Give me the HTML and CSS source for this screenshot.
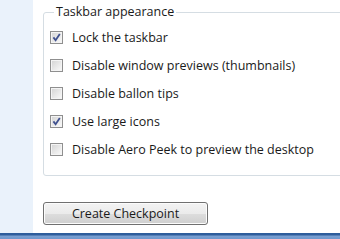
FILE: index.html
```html
<!DOCTYPE html>
<html>
<head>
<meta charset="utf-8">
<link rel="stylesheet" href="styles.css">
</head>
<body>
<div class="page">
  <div class="sidebar"></div>
  <div class="main">
    <fieldset class="group">
      <legend class="legend">Taskbar appearance</legend>
      <div class="row"><span class="box checked"><svg viewBox="0 0 9 9" width="9" height="9"><path d="M1.4 4.4 L3.6 7.2 L7.8 1" fill="none" stroke="#40518f" stroke-width="1.8"/></svg></span><span class="label">Lock the taskbar</span></div>
      <div class="row"><span class="box"></span><span class="label">Disable window previews (thumbnails)</span></div>
      <div class="row"><span class="box"></span><span class="label">Disable ballon tips</span></div>
      <div class="row"><span class="box checked"><svg viewBox="0 0 9 9" width="9" height="9"><path d="M1.4 4.4 L3.6 7.2 L7.8 1" fill="none" stroke="#40518f" stroke-width="1.8"/></svg></span><span class="label">Use large icons</span></div>
      <div class="row"><span class="box"></span><span class="label">Disable Aero Peek to preview the desktop</span></div>
    </fieldset>
    <button class="btn">Create Checkpoint</button>
  </div>
</div>
<div class="bar"></div>
</body>
</html>
```
FILE: styles.css
```css
html, body {
  margin: 0;
  padding: 0;
  width: 340px;
  height: 239px;
  overflow: hidden;
  background: #ffffff;
  font-family: "Open Sans", "Noto Sans", sans-serif;
  font-size: 12.5px;
  color: #1a1a1a;
}
.page {
  display: flex;
  height: 233px;
}
.sidebar {
  width: 33px;
  flex: none;
  background: #eaf2fb;
}
.main {
  flex: 1;
  padding-left: 10px;
  overflow: hidden;
}
.group {
  margin: 5px 0 0 0;
  padding: 4px 0 12px 6px;
  border: 1px solid #d5dde3;
  border-radius: 3px;
  width: 340px;
  box-sizing: border-box;
}
.legend {
  padding: 0 2px;
  margin-left: 4px;
  line-height: 14px;
}
.row {
  display: flex;
  align-items: center;
  height: 28px;
}
.box {
  width: 11px;
  height: 11px;
  border: 1px solid #8f8f8f;
  background: linear-gradient(135deg, #d3d3d3 0%, #efefef 70%, #fafafa 100%);
  box-shadow: inset 0 0 0 1px #f4f4f4;
  display: flex;
  align-items: center;
  justify-content: center;
  flex: none;
}
.label {
  margin-left: 9px;
  white-space: nowrap;
}
.btn {
  display: block;
  margin-top: 26px;
  width: 165px;
  height: 23px;
  border: 1px solid #707070;
  border-radius: 3px;
  background: linear-gradient(#f3f3f3 0%, #ebebeb 50%, #dddddd 51%, #cfcfcf 100%);
  box-shadow: inset 0 0 0 1px #fcfcfc;
  font-family: "Open Sans", "Noto Sans", sans-serif;
  font-size: 12.5px;
  color: #1a1a1a;
  padding: 0;
}
.bar {
  height: 6px;
  background: linear-gradient(#2e5d9c 0px, #2e5d9c 2px, #7aa0d2 3px, #6f97cd 6px);
}
```
